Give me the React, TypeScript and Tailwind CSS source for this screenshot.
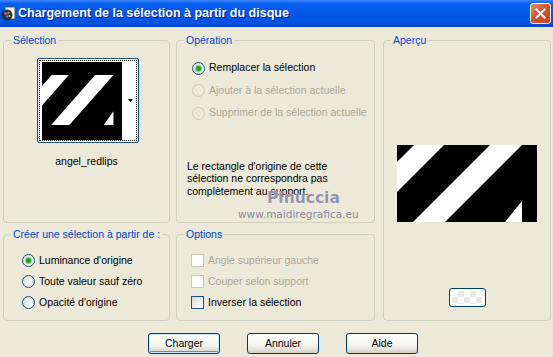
import type { ReactNode } from "react";

const font = "font-['Liberation_Sans',Arial,sans-serif]";

function Group({ label, className, children }: { label: string; className: string; children?: ReactNode }) {
  return (
    <div className={`relative border border-[#D0D0BF] rounded-[4px] ${className}`}>
      <span className="absolute -top-[7px] left-[7px] bg-[#ECE9D8] px-[2px] leading-[12px] text-[#0046D5]">{label}</span>
      {children}
    </div>
  );
}

function Radio({ checked, disabled, label, tall }: { checked?: boolean; disabled?: boolean; label: string; tall?: boolean }) {
  return (
    <div className={`flex items-center ${tall ? "h-[22.5px]" : "h-[21px]"}`}>
      <span
        className={`flex items-center justify-center w-[13px] h-[13px] rounded-full border ${
          disabled ? "border-[#CAC8BB] bg-[#ECE9D8]" : "border-[#1C5180] bg-[linear-gradient(135deg,#DCDCD7,#FFFFFF)]"
        }`}
      >
        {checked && <span className="w-[5px] h-[5px] rounded-full bg-[#21A121] shadow-[0_0_0_1px_#7FD27F]" />}
      </span>
      <span className={`ml-[4px] ${disabled ? "text-[#ACA899]" : "text-black"}`}>{label}</span>
    </div>
  );
}

function Check({ disabled, label }: { disabled?: boolean; label: string }) {
  return (
    <div className="flex items-center h-[21px]">
      <span
        className={`w-[13px] h-[13px] border ${
          disabled ? "border-[#CAC8BB] bg-white" : "border-[#1C5180] bg-[linear-gradient(135deg,#DCDCD7,#FFFFFF)]"
        }`}
      />
      <span className={`ml-[4px] ${disabled ? "text-[#ACA899]" : "text-black"}`}>{label}</span>
    </div>
  );
}

function Button({ label, def }: { label: string; def?: boolean }) {
  return (
    <button
      className={`w-[72px] h-[21px] rounded-[3px] border border-[#003C74] bg-[linear-gradient(180deg,#FFFFFF_0%,#F4F4F0_60%,#D6D0C5_100%)] text-black ${
        def ? "shadow-[inset_0_0_0_1px_#CEE7FF,inset_0_-1px_0_1px_#6982EE]" : ""
      }`}
    >
      {label}
    </button>
  );
}

function Stripes() {
  return (
    <>
      <rect width="140" height="77" fill="#000" />
      <polygon points="17,0 47,0 0,47 0,17" fill="#fff" />
      <polygon points="93,0 125,0 48,77 16,77" fill="#fff" />
      <polygon points="125,56 125,77 108,77" fill="#fff" />
    </>
  );
}

export default function App() {
  return (
    <div className={`w-[553px] h-[357px] bg-[#ECE9D8] overflow-hidden text-[10.5px] ${font}`}>
      {/* barre de titre */}
      <div className="h-[27px] flex items-center bg-[linear-gradient(180deg,#3D8BFF_0%,#0A5FF0_12%,#0057E8_50%,#0053E0_85%,#0042C8_100%)]">
        <svg width="15" height="15" viewBox="0 0 15 15" className="ml-[1px]">
          <rect x="4" y="1" width="10" height="12" fill="#fff" stroke="#555" strokeWidth="1" />
          <circle cx="6" cy="9" r="5.5" fill="#2b2b33" />
          <circle cx="4.5" cy="7.5" r="1.4" fill="#e04c8c" />
          <circle cx="7.5" cy="7" r="1.3" fill="#4caf50" />
          <circle cx="6" cy="10.5" r="1.3" fill="#3d7fe0" />
          <circle cx="8.5" cy="10" r="1" fill="#e8d04a" />
        </svg>
        <span className="ml-[2px] text-white font-bold text-[12.5px] [text-shadow:1px_1px_0_#0A1E8E]">
          Chargement de la sélection à partir du disque
        </span>
        <div className="ml-auto mr-[2px] w-[21px] h-[21px] rounded-[3px] border border-white bg-[linear-gradient(135deg,#E98A6A_0%,#D9542C_45%,#C8401E_100%)] flex items-center justify-center">
          <svg width="11" height="11" viewBox="0 0 11 11">
            <path d="M1.5 1.5 L9.5 9.5 M9.5 1.5 L1.5 9.5" stroke="#fff" strokeWidth="2" strokeLinecap="square" />
          </svg>
        </div>
      </div>

      <div className="flex pl-[3px] pt-[13px]">
        {/* colonne gauche */}
        <div className="w-[167px] flex flex-col">
          <Group label="Sélection" className="h-[183px]">
            <div className="ml-[33px] mt-[17px] w-[102px] h-[85px] border border-[#1C5180] rounded-[2px] bg-white p-[1px]">
              <div className="h-full border border-dotted border-black flex items-center pl-[2px]">
                <svg width="80" height="78" viewBox="0 0 80 78">
                  <rect width="80" height="78" fill="#000" />
                  <svg x="0" y="13" width="80" height="50" viewBox="0 0 140 77" preserveAspectRatio="none">
                    <Stripes />
                  </svg>
                </svg>
                <svg width="5" height="3" viewBox="0 0 5 3" className="ml-auto mr-[3px]">
                  <polygon points="0,0 5,0 2.5,3" fill="#000" />
                </svg>
              </div>
            </div>
            <div className="mt-[12px] text-center text-black leading-[13px]">angel_redlips</div>
          </Group>
          <Group label="Créer une sélection à partir de :" className="mt-[11px] h-[87px] pl-[18px] pt-[15px]">
            <Radio checked label="Luminance d'origine" />
            <Radio label="Toute valeur sauf zéro" />
            <Radio label="Opacité d'origine" />
          </Group>
        </div>

        {/* colonne centrale */}
        <div className="ml-[6px] w-[199px] flex flex-col">
          <Group label="Opération" className="h-[183px] pl-[15px] pt-[16px]">
            <Radio tall checked label="Remplacer la sélection" />
            <Radio tall disabled label="Ajouter à la sélection actuelle" />
            <Radio tall disabled label="Supprimer de la sélection actuelle" />
            <p className="mt-[35px] -ml-[5px] leading-[12.5px] text-black">
              Le rectangle d'origine de cette
              <br />
              sélection ne correspondra pas
              <br />
              complètement au support.
            </p>
            <span className="absolute left-[90px] top-[146px] font-['DejaVu_Sans',sans-serif] font-bold text-[15.5px] text-[#9393AE] [text-shadow:0_0_1px_#fff]">
              Pinuccia
            </span>
            <span className="absolute left-[61px] top-[166px] font-['DejaVu_Sans',sans-serif] text-[10.5px] text-[#8A8A9E]">
              www.maidiregrafica.eu
            </span>
          </Group>
          <Group label="Options" className="mt-[11px] h-[87px] pl-[14px] pt-[15px]">
            <Check disabled label="Angle supérieur gauche" />
            <Check disabled label="Couper selon support" />
            <Check label="Inverser la sélection" />
          </Group>
        </div>

        {/* colonne droite */}
        <Group label="Aperçu" className="ml-[8px] w-[168px] h-[281px] flex flex-col items-center">
          <svg width="140" height="77" viewBox="0 0 140 77" className="mt-[104px] ml-[-1px]">
            <Stripes />
          </svg>
          <div className="mt-[66px] ml-[1px] w-[37px] h-[19px] rounded-[3px] border border-[#003C74] bg-white p-[2px]">
            <div className="w-full h-full bg-[conic-gradient(#E8E8E8_25%,#FFFFFF_0_50%,#E8E8E8_0_75%,#FFFFFF_0)] bg-[length:12px_12px]" />
          </div>
        </Group>
      </div>

      <div className="flex gap-[27px] pl-[148px] pt-[12px]">
        <Button label="Charger" def />
        <Button label="Annuler" />
        <Button label="Aide" />
      </div>
    </div>
  );
}
